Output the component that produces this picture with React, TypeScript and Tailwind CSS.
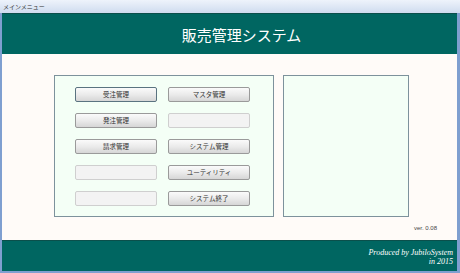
import React from 'react';

const jp = { fontFamily: '"Noto Sans CJK JP", "Noto Sans", sans-serif' };

function MenuButton({ label, focused }: { label?: string; focused?: boolean }) {
  if (!label) {
    return <div className="w-[82px] h-[15px] bg-[#f3f3f3] border border-[#cfcfcf] rounded-[2px]" />;
  }
  return (
    <div
      className={`w-[82px] h-[15px] flex items-center justify-center rounded-[2px] border bg-gradient-to-b from-[#fbfbfb] via-[#ebebeb] to-[#d6d6d6] text-[6.5px] leading-none text-[#333] ${
        focused ? 'border-[#5a7380]' : 'border-[#9a9a9a]'
      }`}
      style={jp}
    >
      {label}
    </div>
  );
}

export default function App() {
  return (
    <div className="w-[460px] h-[273px] flex flex-col bg-[#7f9fd0] overflow-hidden">
      {/* Title bar */}
      <div className="h-[13px] flex items-center pl-[3px] bg-gradient-to-b from-[#eef3fb] to-[#cfdcef] text-[6px] text-[#333] leading-none" style={jp}>
        メインメニュー
      </div>
      <div className="flex-1 flex flex-col ml-[2px] mr-[3px] mb-[2px]">
        {/* Header */}
        <div className="h-[41px] bg-[#006661] flex items-center justify-center pl-[24px] border-t border-[#0b4f4b]">
          <span className="text-white text-[15px] leading-none" style={jp}>
            販売管理システム
          </span>
        </div>

        {/* Body */}
        <div className="h-[186px] bg-[#fffbf8] relative">
          <div className="flex gap-[9px] pl-[52px] pt-[21px]">
            <div className="w-[220px] h-[142px] bg-[#f4fff6] border border-[#7d929c] pl-[20px] pt-[11px]">
              <div className="grid grid-cols-[82px_82px] gap-x-[11px] gap-y-[11px]">
                <MenuButton label="受注管理" focused />
                <MenuButton label="マスタ管理" />
                <MenuButton label="発注管理" />
                <MenuButton />
                <MenuButton label="請求管理" />
                <MenuButton label="システム管理" />
                <MenuButton />
                <MenuButton label="ユーティリティ" />
                <MenuButton />
                <MenuButton label="システム終了" />
              </div>
            </div>
            <div className="w-[126px] h-[142px] bg-[#f4fff6] border border-[#7d929c]" />
          </div>
          <div className="flex justify-end pr-[20px] pt-[8px]">
            <span className="text-[6px] leading-none text-[#444]" style={{ fontFamily: '"Liberation Sans", sans-serif' }}>
              ver. 0.08
            </span>
          </div>
        </div>

        {/* Footer */}
        <div className="flex-1 bg-[#006661] border-t border-[#0b4f4b] flex flex-col items-end justify-center pr-[4px] pt-[2px]">
          <span className="text-white italic text-[8px] leading-[9px]" style={{ fontFamily: '"Liberation Serif", serif' }}>
            Produced by JubiloSystem
          </span>
          <span className="text-white italic text-[8px] leading-[9px]" style={{ fontFamily: '"Liberation Serif", serif' }}>
            in 2015
          </span>
        </div>
      </div>
    </div>
  );
}
